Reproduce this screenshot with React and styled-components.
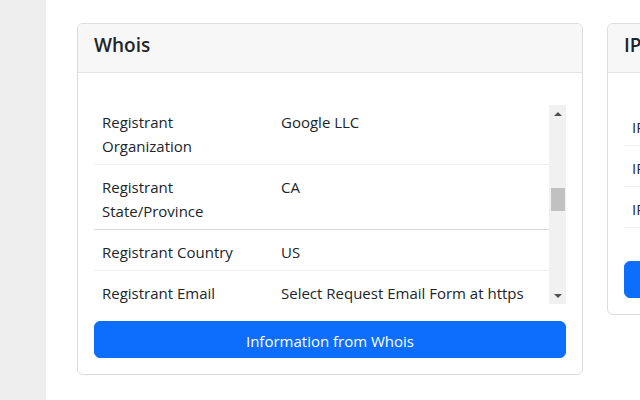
import React, { useLayoutEffect, useRef } from 'react';
import styled, { createGlobalStyle } from 'styled-components';

const GlobalStyle = createGlobalStyle`
    html, body {
        margin: 0;
        padding: 0;
        width: 640px;
        height: 400px;
        overflow: hidden;
        background: #fff;
    }
    body {
        font-family: "Open Sans", "Noto Sans", "Liberation Sans", sans-serif;
        font-size: 15px;
        line-height: 24px;
        color: #212529;
    }
    * {
        box-sizing: border-box;
    }
`;

const Layout = styled.div`
    display: flex;
    height: 400px;
`;

const Sidebar = styled.aside`
    flex: 0 0 46px;
    background: #eeeeee;
`;

const Main = styled.main`
    flex: 1;
    min-width: 0;
    padding: 23px 0 0 31px;
    display: flex;
    align-items: flex-start;
    gap: 24px;
    overflow: hidden;
`;

const Card = styled.section`
    flex: 0 0 ${({ width }) => width}px;
    background: #fff;
    border: 1px solid #dcdcdc;
    border-radius: 6px;
    overflow: hidden;
`;

const CardHeader = styled.header`
    background: #f7f7f7;
    border-bottom: 1px solid #e4e4e4;
    padding: 9px 16px 0;
    height: 49px;
`;

const Title = styled.h5`
    margin: 0;
    font-size: 19px;
    font-weight: 600;
    line-height: 24px;
    white-space: nowrap;
`;

const CardBody = styled.div`
    padding: 32px 16px 16px;
`;

const ScrollBox = styled.div`
    display: flex;
    height: 199px;
    margin-bottom: 17px;
`;

const Viewport = styled.div`
    flex: 1;
    min-width: 0;
    overflow: hidden;
`;

const Table = styled.table`
    width: 100%;
    border-collapse: collapse;
    table-layout: fixed;
`;

const Row = styled.tr`
    border-bottom: 1px solid ${({ strong }) => (strong ? '#dadada' : '#f0f0f0')};
`;

const Cell = styled.td`
    padding: 10px 8px 6px;
    vertical-align: top;
    overflow-wrap: break-word;
    white-space: ${({ nowrap }) => (nowrap ? 'nowrap' : 'normal')};
`;

const Track = styled.div`
    flex: 0 0 17px;
    background: #f1f1f1;
    display: flex;
    flex-direction: column;
    align-items: center;
`;

const Arrow = styled.div`
    height: 17px;
    width: 17px;
    display: flex;
    align-items: center;
    justify-content: center;
    margin-top: ${({ down }) => (down ? 'auto' : '0')};

    &::after {
        content: '';
        border-left: 4px solid transparent;
        border-right: 4px solid transparent;
        ${({ down }) => (down ? 'border-top: 4px solid #505050;' : 'border-bottom: 4px solid #505050;')}
    }
`;

const Thumb = styled.div`
    width: 14px;
    height: 23px;
    margin-top: 66px;
    background: #c1c1c1;
`;

const Button = styled.button`
    display: block;
    width: 100%;
    height: 37px;
    border: 1px solid #0d6efd;
    border-radius: 6px;
    background: #0d6efd;
    color: #fff;
    font: inherit;
    white-space: nowrap;
    padding: 2px 12px 0;
`;

const IpButtonWrap = styled.div`
    margin-top: 33px;
`;

const EMAIL_FORM = 'Select Request Email Form at https\u200B://domains.google.com/registrar/whois';

const whois = [
    ['Domain Name', 'GOOGLE.COM'],
    ['Registry Domain ID', '2138514_DOMAIN_COM-VRSN'],
    ['Registrar WHOIS Server', 'whois.markmonitor.com'],
    ['Registrar URL', 'http://www.markmonitor.com'],
    ['Updated Date', '2019-09-09T15:39:04+0000'],
    ['Creation Date', '1997-09-15T07:00:00+0000'],
    ['Registrar Registration Expiration Date', '2028-09-13T07:00:00+0000'],
    ['Registrar', 'MarkMonitor, Inc.'],
    ['Registrar IANA ID', '292'],
    ['Registrar Abuse Contact Email', 'abusecomplaints@markmonitor.com'],
    ['Registrar Abuse Contact Phone', '+1.2086851750'],
    ['Domain Status', 'clientUpdateProhibited'],
    ['Registrant Organization', 'Google LLC'],
    ['Registrant State/Province', 'CA', true],
    ['Registrant Country', 'US'],
    ['Registrant Email', EMAIL_FORM],
    ['Admin Organization', 'Google LLC'],
    ['Admin State/Province', 'CA'],
    ['Admin Country', 'US'],
    ['Admin Email', EMAIL_FORM],
    ['Tech Organization', 'Google LLC'],
    ['Tech State/Province', 'CA'],
    ['Tech Country', 'US'],
    ['Name Server', 'ns1.google.com'],
    ['Name Server', 'ns2.google.com'],
    ['DNSSEC', 'unsigned'],
];

const ipRows = [
    ['IP Address', '142.250.185.78'],
    ['IP Country', 'United States'],
    ['IP Organization', 'Google LLC'],
];

const WhoisCard = () => {
    const viewportRef = useRef(null);
    const targetRef = useRef(null);

    // keep the list scrolled to the registrant block, as in the captured state
    useLayoutEffect(() => {
        const viewport = viewportRef.current;
        const target = targetRef.current;
        if (!viewport || !target) return;
        const offset = target.getBoundingClientRect().top - viewport.getBoundingClientRect().top;
        viewport.scrollTop = viewport.scrollTop + offset + 5;
    }, []);

    return (
        <Card width={506}>
            <CardHeader>
                <Title>Whois</Title>
            </CardHeader>
            <CardBody>
                <ScrollBox>
                    <Viewport ref={viewportRef}>
                        <Table>
                            <colgroup>
                                <col style={{ width: 179 }} />
                                <col />
                            </colgroup>
                            <tbody>
                                {whois.map(([key, value, strong], i) => (
                                    <Row
                                        key={i}
                                        strong={strong}
                                        ref={key === 'Registrant Organization' ? targetRef : undefined}
                                    >
                                        <Cell>{key}</Cell>
                                        <Cell>{value}</Cell>
                                    </Row>
                                ))}
                            </tbody>
                        </Table>
                    </Viewport>
                    <Track>
                        <Arrow />
                        <Thumb />
                        <Arrow down />
                    </Track>
                </ScrollBox>
                <Button>Information from Whois</Button>
            </CardBody>
        </Card>
    );
};

const IpCard = () => (
    <Card width={320}>
        <CardHeader>
            <Title>IP Information</Title>
        </CardHeader>
        <CardBody>
            <Table>
                <colgroup>
                    <col style={{ width: 140 }} />
                    <col />
                </colgroup>
                <tbody>
                    {ipRows.map(([key, value]) => (
                        <Row key={key}>
                            <Cell nowrap>{key}</Cell>
                            <Cell nowrap>{value}</Cell>
                        </Row>
                    ))}
                </tbody>
            </Table>
            <IpButtonWrap>
                <Button>Information from IP</Button>
            </IpButtonWrap>
        </CardBody>
    </Card>
);

const App = () => (
    <>
        <GlobalStyle />
        <Layout>
            <Sidebar />
            <Main>
                <WhoisCard />
                <IpCard />
            </Main>
        </Layout>
    </>
);

export default App;
